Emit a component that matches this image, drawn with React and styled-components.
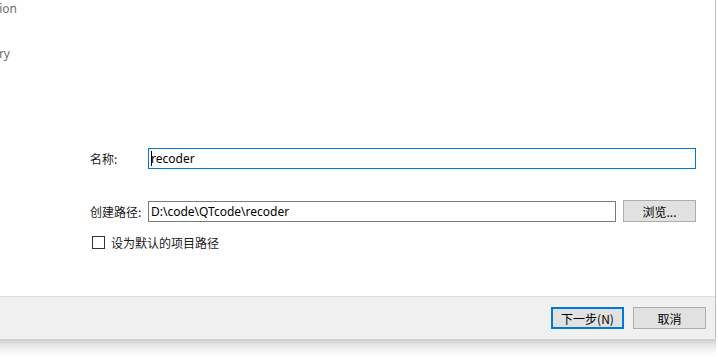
import React from "react";
import styled, { createGlobalStyle } from "styled-components";

const GlobalStyle = createGlobalStyle`
  html, body {
    margin: 0;
    padding: 0;
    background: #ffffff;
  }
  body {
    font-family: "Noto Sans", "Noto Sans CJK SC", sans-serif;
    font-size: 12px;
    color: #000000;
  }
`;

const Screen = styled.div`
  width: 718px;
  height: 357px;
  overflow: hidden;
  background: #ffffff;
`;

const Dialog = styled.div`
  width: 715px;
  height: 339px;
  border-right: 1px solid #bdbdbd;
  display: flex;
  flex-direction: column;
  background: #ffffff;
`;

const Shadow = styled.div`
  width: 716px;
  height: 18px;
  background: linear-gradient(#cdcdcd 0px, #e2e2e2 5px, #f3f3f3 11px, #ffffff 18px);
`;

const Body = styled.div`
  flex: 1;
  display: flex;
`;

const Sidebar = styled.div`
  width: 20px;
  display: flex;
  flex-direction: column;
  gap: 27px;
`;

const StepItem = styled.div`
  display: flex;
  justify-content: flex-end;
  overflow: hidden;
  white-space: nowrap;
  width: 20px;
  height: 18px;
  line-height: 18px;
  color: #6d6d6d;
  font-family: "Noto Sans", "Noto Sans CJK SC", sans-serif;
  font-size: 12px;
  margin-left: ${(p) => p.$shift || 0}px;
`;

const Content = styled.div`
  flex: 1;
  padding: 148px 19px 0 70px;
`;

const Form = styled.div`
  display: grid;
  grid-template-columns: 58px 1fr;
  row-gap: 31px;
  align-items: center;
`;

const Label = styled.div`
  font-family: "Noto Sans CJK SC", sans-serif;
  font-size: 12px;
  color: #1a1a1a;
`;

const Field = styled.div`
  position: relative;
  height: 19px;
  border: 1px solid ${(p) => (p.$focused ? "#0078d7" : "#7a7a7a")};
  display: flex;
  align-items: center;
  padding-left: 2px;
  font-family: "Noto Sans", "Noto Sans CJK SC", sans-serif;
  font-size: 12px;
  color: #000;
  flex: 1;
`;

const Caret = styled.span`
  position: absolute;
  left: 2px;
  top: 2px;
  width: 1px;
  height: 15px;
  background: #000;
`;

const PathRow = styled.div`
  display: flex;
  gap: 7px;
  align-items: center;
`;

const Button = styled.button`
  width: ${(p) => p.$w || 73}px;
  height: 22px;
  box-sizing: border-box;
  background: #e1e1e1;
  border: ${(p) => (p.$primary ? "2px solid #0078d7" : "1px solid #adadad")};
  font-family: "Noto Sans CJK SC", sans-serif;
  font-size: 12px;
  color: #000;
  padding: 0;
  display: flex;
  align-items: center;
  justify-content: center;
`;

const CheckRow = styled.div`
  grid-column: 1 / 3;
  display: flex;
  align-items: center;
  gap: 6px;
  margin-top: -22px;
  padding-left: 2px;
  font-family: "Noto Sans CJK SC", sans-serif;
  font-size: 12px;
  color: #1a1a1a;
`;

const Box = styled.span`
  width: 11px;
  height: 11px;
  border: 1px solid #333333;
  background: #fff;
`;

const Footer = styled.div`
  height: 42px;
  border-top: 1px solid #dfdfdf;
  background: #f0f0f0;
  display: flex;
  justify-content: flex-end;
  align-items: center;
  gap: 9px;
  padding-right: 9px;
`;

export default function App() {
  return (
    <>
      <GlobalStyle />
      <Screen>
        <Dialog>
          <Body>
            <Sidebar>
              <StepItem $shift={-3}>Location</StepItem>
              <StepItem $shift={-10}>Summary</StepItem>
            </Sidebar>
            <Content>
              <Form>
                <Label>名称:</Label>
                <Field $focused>
                  recoder
                  <Caret />
                </Field>
                <Label>创建路径:</Label>
                <PathRow>
                  <Field>D:\code\QTcode\recoder</Field>
                  <Button>浏览...</Button>
                </PathRow>
                <CheckRow>
                  <Box />
                  设为默认的项目路径
                </CheckRow>
              </Form>
            </Content>
          </Body>
          <Footer>
            <Button $primary>下一步(N)</Button>
            <Button>取消</Button>
          </Footer>
        </Dialog>
        <Shadow />
      </Screen>
    </>
  );
}
